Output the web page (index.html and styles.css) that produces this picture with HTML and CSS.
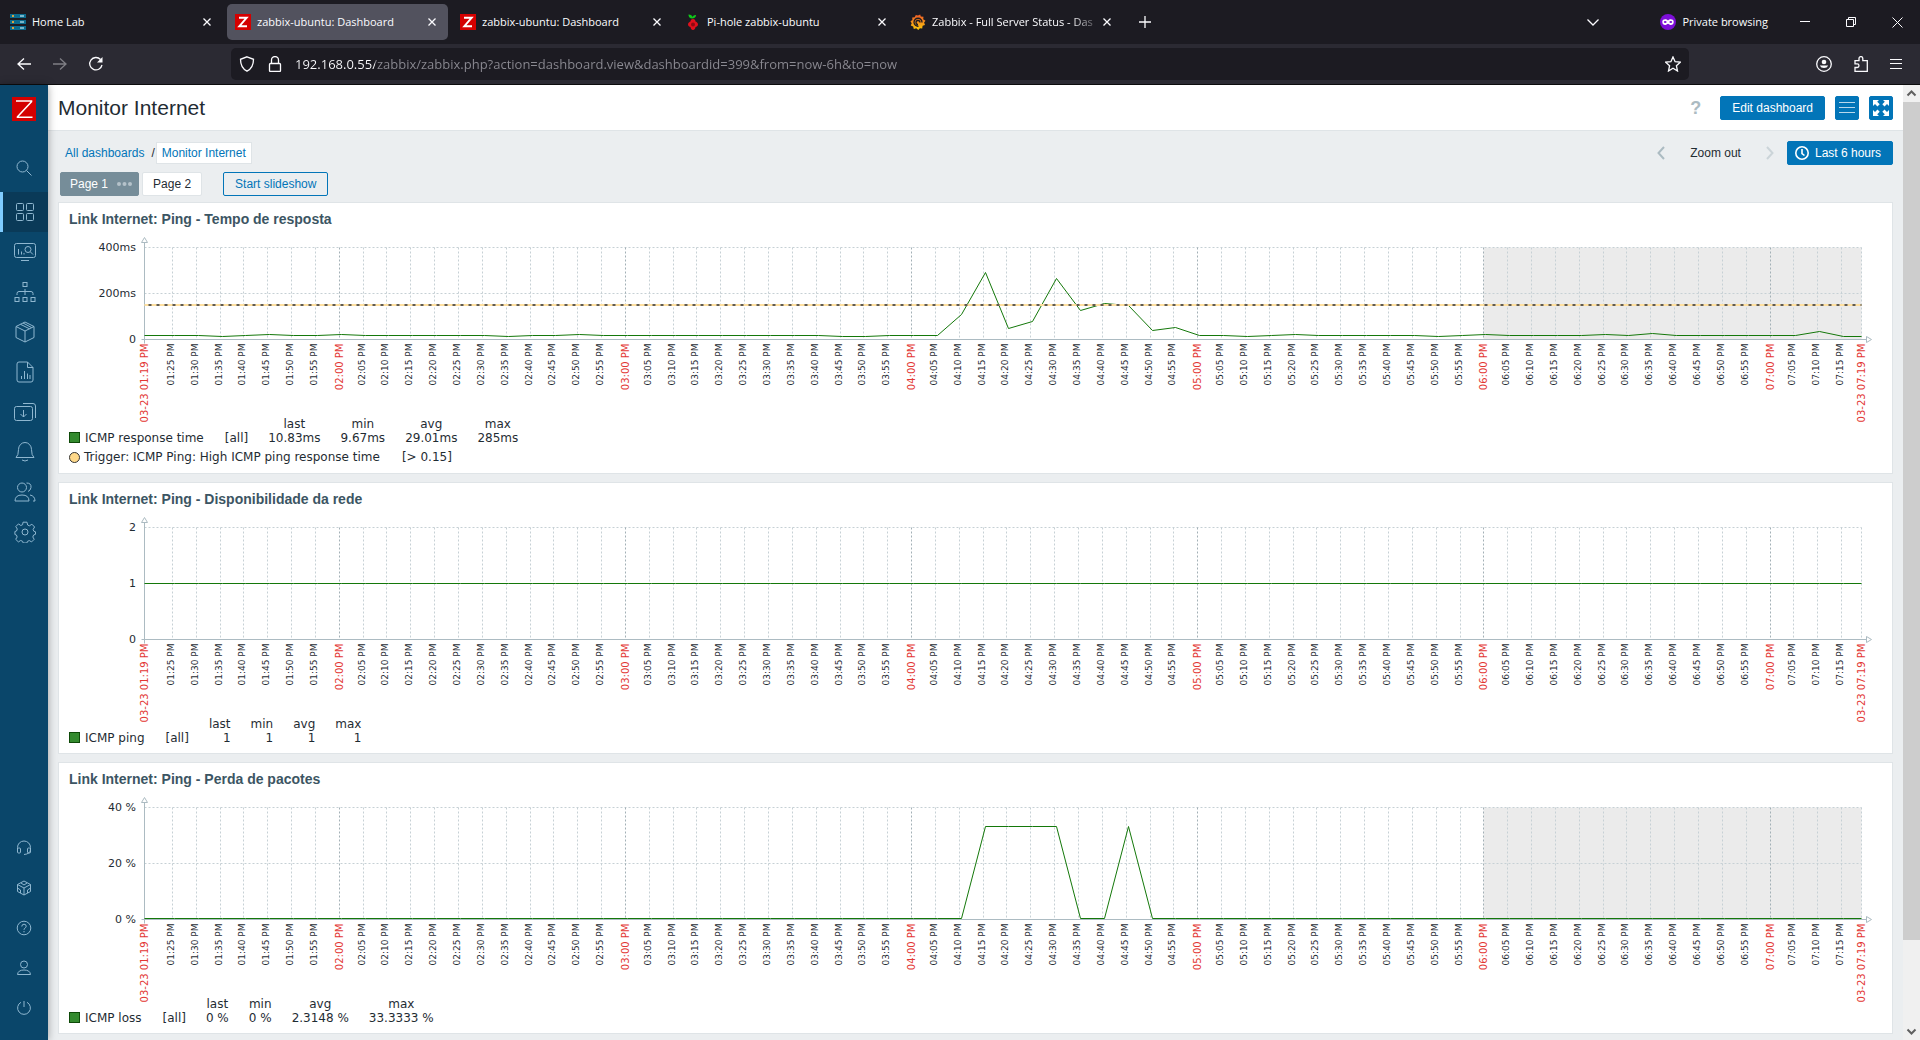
FILE: index.html
```html
<!DOCTYPE html>
<html lang="en">
<head>
<meta charset="utf-8">
<title>zabbix-ubuntu: Dashboard</title>
<link rel="stylesheet" href="styles.css">
</head>
<body>
<header class="browser">
  <div class="tabbar">
    <div class="tabs">
      <div class="tab">
        <svg class="favicon" viewBox="0 0 16 16"><g fill="#0b6a8c"><rect width="16" height="4"/><rect y="6" width="16" height="4"/><rect y="12" width="16" height="4"/></g><g fill="#d9a441"><rect x="2" y="1" width="2" height="2"/><rect x="2" y="7" width="2" height="2"/><rect x="2" y="13" width="2" height="2"/></g><path d="M10 2h4M10 8h4M10 14h4" stroke="#9fd0dd"/></svg>
        <span class="tab-title">Home Lab</span>
        <button class="tab-close" aria-label="Close tab"><svg viewBox="0 0 8 8"><path d="M.5.5l7 7m0-7l-7 7"/></svg></button>
      </div>
      <div class="tab tab-active">
        <svg class="favicon" viewBox="0 0 16 16"><rect width="16" height="16" fill="#d40000"/><path d="M4 3.8h7.6L4.400 12.200H12" fill="none" stroke="#fff" stroke-width="2"/></svg>
        <span class="tab-title">zabbix-ubuntu: Dashboard</span>
        <button class="tab-close" aria-label="Close tab"><svg viewBox="0 0 8 8"><path d="M.5.5l7 7m0-7l-7 7"/></svg></button>
      </div>
      <div class="tab">
        <svg class="favicon" viewBox="0 0 16 16"><rect width="16" height="16" fill="#d40000"/><path d="M4 3.8h7.6L4.400 12.200H12" fill="none" stroke="#fff" stroke-width="2"/></svg>
        <span class="tab-title">zabbix-ubuntu: Dashboard</span>
        <button class="tab-close" aria-label="Close tab"><svg viewBox="0 0 8 8"><path d="M.5.5l7 7m0-7l-7 7"/></svg></button>
      </div>
      <div class="tab">
        <svg class="favicon" viewBox="0 0 16 16"><path d="M7 4.500C4 4 3.500 2 3.500.5 6 .5 7 1.500 7.500 3 8 1.500 9.500.8 11 1c0 2-1.500 3.500-4 3.500z" fill="#10c81a"/><path d="M8 5c2 0 2.500 1.500 2.500 2.500C12 8 13 9 13 10.500s-1.500 2.500-2.500 2.500c0 1.500-1 3-2.500 3s-2.500-1.500-2.500-3C4.500 13 3 12 3 10.500S4 8 5.500 7.500C5.500 6.500 6 5 8 5z" fill="#e0101c"/><circle cx="8" cy="10.500" r="2" fill="#8e0a12"/></svg>
        <span class="tab-title">Pi-hole zabbix-ubuntu</span>
        <button class="tab-close" aria-label="Close tab"><svg viewBox="0 0 8 8"><path d="M.5.5l7 7m0-7l-7 7"/></svg></button>
      </div>
      <div class="tab">
        <svg class="favicon" viewBox="0 0 16 16"><defs><linearGradient id="gf" x2="0" y2="1"><stop stop-color="#f05a28"/><stop offset="1" stop-color="#fbca0a"/></linearGradient></defs><path d="M8 1.500l2.200-1 .6 2 2.700.2-.3 2.500 2.300 1.600-1.400 1.700.9 2.500-2.400.8-.4 2.700-2.300-.3L8.300 16l-2-1.700-2.500.7-.6-2.500-2.400-1 .9-2.300L.5 7.200 2.400 6 2.200 3.500l2.500-.3L5.800 1z" fill="url(#gf)"/><path d="M12 8.500A4 4 0 1 0 8.500 12.200M10 8.500a2 2 0 1 0-2 2" fill="none" stroke="#1c1b22" stroke-width="1.300"/></svg>
        <span class="tab-title tab-title-fade">Zabbix - Full Server Status - Das</span>
        <button class="tab-close" aria-label="Close tab"><svg viewBox="0 0 8 8"><path d="M.5.5l7 7m0-7l-7 7"/></svg></button>
      </div>
      <button class="new-tab" aria-label="New tab"><svg viewBox="0 0 12 12"><path d="M6 0v12M0 6h12"/></svg></button>
    </div>
    <div class="window-tools">
      <button class="chrome-btn" aria-label="List all tabs"><svg width="14" height="14" viewBox="0 0 14 14"><path d="M1.500 4.500L7 10l5.500-5.500"/></svg></button>
      <span class="private"><svg width="16" height="16" viewBox="0 0 16 16"><circle cx="8" cy="8" r="8" fill="#7d0fd8"/><path d="M8 6.500C6.500 4.800 2.500 4.900 2.300 7.500 2.200 10.300 4 11.200 5.500 11c1.200-.2 1.700-1.200 2.500-1.200s1.300 1 2.500 1.200c1.500.2 3.300-.7 3.200-3.500C13.500 4.900 9.500 4.800 8 6.500z" fill="#fff"/><ellipse cx="5.200" cy="8" rx="1.400" ry="1" fill="#7d0fd8"/><ellipse cx="10.800" cy="8" rx="1.400" ry="1" fill="#7d0fd8"/></svg>Private browsing</span>
      <button class="win-btn" aria-label="Minimize"><svg width="10" height="10" viewBox="0 0 10 10"><path d="M0 4.500h10"/></svg></button>
      <button class="win-btn" aria-label="Restore"><svg width="11" height="11" viewBox="0 0 11 11"><path d="M.5 2.500h7v7h-7zM2.500 2.500v-2h7v7h-2"/></svg></button>
      <button class="win-btn" aria-label="Close window"><svg width="11" height="11" viewBox="0 0 11 11"><path d="M.5.5l10 10m0-10l-10 10"/></svg></button>
    </div>
  </div>
  <div class="toolbar">
    <div class="nav-buttons">
      <button class="chrome-btn" aria-label="Back"><svg width="16" height="16" viewBox="0 0 16 16"><path d="M15 8H2m6-5.500L2 8l6 5.500"/></svg></button>
      <button class="chrome-btn" aria-label="Forward" disabled><svg width="16" height="16" viewBox="0 0 16 16"><path d="M1 8h13M8 2.500L14 8l-6 5.500"/></svg></button>
      <button class="chrome-btn" aria-label="Reload"><svg width="16" height="16" viewBox="0 0 16 16"><path d="M14 9A6.200 6.200 0 1 1 12.500 3.500"/><path d="M14.500 1v5.500H9z" fill="#fbfbfe" stroke="none"/></svg></button>
    </div>
    <div class="urlbar">
      <svg width="16" height="16" viewBox="0 0 16 16"><path d="M8 .8l6.500 2.500C14.500 9.500 12.500 13 8 15.200 3.500 13 1.500 9.500 1.500 3.300z"/></svg>
      <svg width="16" height="16" viewBox="0 0 16 16"><rect x="2.500" y="7.500" width="11" height="8" rx="1"/><path d="M4.500 7.500V4a3.500 3.500 0 0 1 7 0v3.500"/></svg>
      <input class="url" type="text" aria-label="Address" value="192.168.0.55/zabbix/zabbix.php?action=dashboard.view&amp;dashboardid=399&amp;from=now-6h&amp;to=now">
      <button class="chrome-btn" aria-label="Bookmark"><svg width="16" height="16" viewBox="0 0 16 16"><path d="M8 .9l2.100 4.800 5.200.5-3.900 3.500 1.100 5.300L8 12.300 3.500 15l1.100-5.300L.7 6.200l5.200-.5z"/></svg></button>
    </div>
    <div class="app-buttons">
      <button class="chrome-btn" aria-label="Account"><svg width="16" height="16" viewBox="0 0 16 16"><circle cx="8" cy="8" r="7.300"/><circle cx="8" cy="6" r="2.300" fill="#fbfbfe" stroke="none"/><path d="M3.800 9.500h8.400A4.500 4 0 0 1 3.800 9.500z" fill="#fbfbfe" stroke="none"/></svg></button>
      <button class="chrome-btn" aria-label="Extensions"><svg width="16" height="16" viewBox="0 0 16 16"><path d="M2 15.300V11.500h2.200a1.800 1.800 0 0 0 0-3.600H2V4.700h4V2.500a1.900 1.900 0 0 1 3.800 0v2.200h4.500v10.600z"/></svg></button>
      <button class="chrome-btn" aria-label="Menu"><svg width="12" height="16" viewBox="0 0 12 16"><path d="M0 3.500h12M0 7.500h12M0 12.500h12"/></svg></button>
    </div>
  </div>
</header>

<div class="app">
  <aside class="sidebar">
    <a class="logo" href="#" aria-label="Zabbix"><svg width="24" height="24" viewBox="0 0 24 24"><rect width="24" height="24" fill="#d40000"/><path d="M4 4h15.500v.8L5.500 19.800v.4H20.500" fill="none" stroke="#fff" stroke-width="1.600"/></svg></a>
    <a class="side-item side-search" href="#" aria-label="Search"><svg width="16" height="16" viewBox="0 0 16 16"><circle cx="6.500" cy="6.500" r="5.500"/><path d="M10.500 10.500l5 5"/></svg></a>
    <nav class="side-menu">
      <a class="side-item side-active" href="#" aria-label="Dashboards"><svg width="20" height="20" viewBox="0 0 20 20"><rect x="1.500" y="1.500" width="7" height="7" rx="1"/><rect x="11.500" y="1.500" width="7" height="7" rx="1"/><rect x="1.500" y="11.500" width="7" height="7" rx="1"/><rect x="11.500" y="11.500" width="7" height="7" rx="1"/></svg></a>
      <a class="side-item" href="#" aria-label="Monitoring"><svg width="22" height="20" viewBox="0 0 22 20"><rect x=".5" y="1.500" width="21" height="14" rx="2"/><path d="M4.500 7v5.500M7.500 9.500v3M10 11v1.500M7 18.500h8M16.500 10l2.500 2.500"/><circle cx="14" cy="7.500" r="3"/></svg></a>
      <a class="side-item" href="#" aria-label="Services"><svg width="22" height="22" viewBox="0 0 22 22"><rect x="9" y="1.500" width="4" height="4"/><rect x="1" y="16.500" width="4" height="4"/><rect x="9" y="16.500" width="4" height="4"/><rect x="17" y="16.500" width="4" height="4"/><path d="M11 8v6M3 14v-1.500q0-2 2-2h12q2 0 2 2V14"/></svg></a>
      <a class="side-item" href="#" aria-label="Inventory"><svg width="20" height="22" viewBox="0 0 20 22"><path d="M10 1l9 4.500v11L10 21l-9-4.500v-11zM1 5.500l9 4.500 9-4.500M10 10v11M5.500 3.300l9 4.500M8 2l8.500 4.500"/></svg></a>
      <a class="side-item" href="#" aria-label="Reports"><svg width="18" height="22" viewBox="0 0 18 22"><path d="M11.500 1H3Q1 1 1 3v16q0 2 2 2h12q2 0 2-2V6.500zV6.500H17M5.500 15v3M8.500 10v8M11.500 12.500V18M14 14v4"/></svg></a>
      <a class="side-item" href="#" aria-label="Data collection"><svg width="22" height="20" viewBox="0 0 22 20"><rect x=".5" y="4.500" width="18" height="14" rx="2"/><path d="M9.500 8v7M6.500 12l3 3 3-3M9 1.500h10q2.500 0 2.500 2.500v12"/></svg></a>
      <a class="side-item" href="#" aria-label="Alerts"><svg width="20" height="22" viewBox="0 0 20 22"><path d="M1 16.500q2.500-2 2.500-8a6.500 7 0 0 1 13 0q0 6 2.500 8zM7 19q3 2 6 0"/></svg></a>
      <a class="side-item" href="#" aria-label="Users"><svg width="22" height="20" viewBox="0 0 22 20"><circle cx="8" cy="5.500" r="4.500"/><path d="M1 19q0-6 7-6t7 6zM12.500 1q5 0 4.500 4.500-.5 3-3 4M16 13q5 1 5 6h-2"/></svg></a>
      <a class="side-item" href="#" aria-label="Administration"><svg width="22" height="22" viewBox="0 0 22 22"><circle cx="11" cy="11" r="3"/><path d="M9 1.200h4l.6 2.800 1.800.8 2.500-1.600 2.700 2.800-1.500 2.400.7 1.800 1.700.6v2.500l-1.900.7-.8 2 1.400 2.300-2.600 2.600-2.300-1.300-1.900.8-.5 1.600H9.200l-.6-1.700-1.900-.8-2.300 1.400-2.700-2.600L3.200 16l-.8-2-1.500-.5v-3l1.600-.5.8-2-1.500-2.400 2.700-2.700L6.800 4.500l1.800-.8z"/></svg></a>
    </nav>
    <nav class="side-menu side-bottom">
      <a class="side-item" href="#" aria-label="Support"><svg width="16" height="16" viewBox="0 0 16 16"><path d="M1.500 9V7.500a6.500 6.500 0 0 1 13 0V9M14.500 9q0 5-6.500 5.500"/><rect x="1.500" y="8" width="3" height="5" rx="1"/><rect x="11.500" y="8" width="3" height="5" rx="1"/></svg></a>
      <a class="side-item" href="#" aria-label="Integrations"><svg width="16" height="16" viewBox="0 0 16 16"><path d="M8 1l6.500 3.500v7L8 15l-6.500-3.500v-7zM1.500 4.500L8 8l6.500-3.500M8 8v7M5 3l3 2 3-2M1.500 8l3 2v3M14.500 8l-3 2v3"/></svg></a>
      <a class="side-item" href="#" aria-label="Help"><svg width="16" height="16" viewBox="0 0 16 16"><circle cx="8" cy="8" r="6.800"/><path d="M5.800 6.500q0-2.300 2.200-2.300t2.200 2q0 1.200-1.100 1.800T8 9.800M8 11v1.300"/></svg></a>
      <a class="side-item" href="#" aria-label="User settings"><svg width="16" height="16" viewBox="0 0 16 16"><circle cx="8" cy="4.500" r="3.500"/><path d="M1.500 14.500q.5-4.500 6.500-4.500t6.500 4.500z"/></svg></a>
      <a class="side-item" href="#" aria-label="Sign out"><svg width="16" height="16" viewBox="0 0 16 16"><path d="M8 1v6M5 2.300a6.400 6.400 0 1 0 6 0"/></svg></a>
    </nav>
  </aside>

  <main class="content">
    <div class="page-head">
      <h1>Monitor Internet</h1>
      <div class="head-tools">
        <a class="help" href="#" aria-label="Help">?</a>
        <button class="btn">Edit dashboard</button>
        <button class="btn btn-icon" aria-label="Actions"><svg width="16" height="12" viewBox="0 0 16 12"><path d="M0 .5h16M0 5.500h16M0 10.500h16" stroke="#b8d8ec"/></svg></button>
        <button class="btn btn-icon" aria-label="Kiosk mode"><svg width="16" height="16" viewBox="0 0 16 16"><path d="M0 0h6L4.200 1.800l2.500 2.500-2.200 2.200L2 4 0 6zM16 0v6l-2-2-2.500 2.500-2.200-2.200 2.500-2.500L10 0zM0 16v-6l2 2 2.500-2.500 2.200 2.200-2.500 2.500L6 16zM16 16h-6l1.800-1.800-2.500-2.500 2.200-2.200L14 12l2-2z" fill="#fff" stroke="none"/></svg></button>
      </div>
    </div>
    <div class="filter-row">
      <nav class="crumbs" aria-label="Breadcrumb"><a href="#">All dashboards</a><span>/</span><a class="crumb-current" href="#">Monitor Internet</a></nav>
      <div class="time-tools">
        <button class="arrow" aria-label="Previous period"><svg width="8" height="14" viewBox="0 0 8 14"><path d="M7 1L1.500 7 7 13"/></svg></button>
        <button class="zoom-out">Zoom out</button>
        <button class="arrow arrow-off" aria-label="Next period" disabled><svg width="8" height="14" viewBox="0 0 8 14"><path d="M1 1l5.500 6L1 13"/></svg></button>
        <button class="btn btn-time"><svg width="14" height="14" viewBox="0 0 14 14"><circle cx="7" cy="7" r="6.200"/><path d="M7 3v4.500l2.500 2"/></svg>Last 6 hours</button>
      </div>
    </div>
    <div class="page-row">
      <button class="page-tab page-tab-on">Page 1<svg width="15" height="4" viewBox="0 0 15 4"><g fill="#b5c2ca"><circle cx="2" cy="2" r="2"/><circle cx="7.500" cy="2" r="2"/><circle cx="13" cy="2" r="2"/></g></svg></button>
      <button class="page-tab">Page 2</button>
      <button class="btn-alt">Start slideshow</button>
    </div>

    <div class="widgets">
      <section class="widget">
        <h2>Link Internet: Ping - Tempo de resposta</h2>
        <div class="chart" data-chart="response"></div>
        <table class="legend">
          <thead><tr><td></td><td></td><th>last</th><th>min</th><th>avg</th><th>max</th></tr></thead>
          <tbody><tr><td><i class="swatch"></i>ICMP response time</td><td>[all]</td><td>10.83ms</td><td>9.67ms</td><td>29.01ms</td><td>285ms</td></tr></tbody>
        </table>
        <p class="trigger"><i class="dot"></i><span>Trigger: ICMP Ping: High ICMP ping response time</span><span>[&gt; 0.15]</span></p>
      </section>
      <section class="widget">
        <h2>Link Internet: Ping - Disponibilidade da rede</h2>
        <div class="chart" data-chart="ping"></div>
        <table class="legend legend-right">
          <thead><tr><td></td><td></td><th>last</th><th>min</th><th>avg</th><th>max</th></tr></thead>
          <tbody><tr><td><i class="swatch"></i>ICMP ping</td><td>[all]</td><td>1</td><td>1</td><td>1</td><td>1</td></tr></tbody>
        </table>
      </section>
      <section class="widget">
        <h2>Link Internet: Ping - Perda de pacotes</h2>
        <div class="chart" data-chart="loss"></div>
        <table class="legend">
          <thead><tr><td></td><td></td><th>last</th><th>min</th><th>avg</th><th>max</th></tr></thead>
          <tbody><tr><td><i class="swatch"></i>ICMP loss</td><td>[all]</td><td>0 %</td><td>0 %</td><td>2.3148 %</td><td>33.3333 %</td></tr></tbody>
        </table>
      </section>
    </div>
  </main>

  <div class="scrollbar" aria-hidden="true">
    <svg width="17" height="17" viewBox="0 0 17 17"><path d="M4.500 10.500l4-4 4 4"/></svg>
    <div class="scroll-track"><div class="scroll-thumb"></div></div>
    <svg width="17" height="17" viewBox="0 0 17 17"><path d="M4.500 6.500l4 4 4-4"/></svg>
  </div>
</div>
<script src="charts.js"></script>
</body>
</html>
```

FILE: styles.css
```css
* { box-sizing: border-box; }
body {
  margin: 0;
  min-height: 100vh;
  display: flex;
  flex-direction: column;
  background: #ebeef0;
  color: #1f2c33;
  font: 12px/16px Arial, "Liberation Sans", sans-serif;
}
button, input { font: inherit; color: inherit; border: 0; padding: 0; margin: 0; background: none; }
a { color: #0275b8; text-decoration: none; }
svg { display: block; flex: none; }
h1, h2, p { margin: 0; }

/* Browser frame */
.browser {
  background: #1c1b22;
  color: #fbfbfe;
  border-bottom: 1px solid #0c0c0d;
  font: 11px/16px "Open Sans", "Noto Sans", sans-serif;
}
.browser svg { fill: none; stroke: #fbfbfe; stroke-width: 1.3; }
.browser .favicon, .private svg { stroke: none; }
.tabbar { display: flex; justify-content: space-between; height: 44px; padding: 4px 0; }
.tabs { display: flex; gap: 4px; padding-left: 2px; min-width: 0; }
.tab {
  width: 221px;
  height: 36px;
  padding: 0 8px;
  display: flex;
  align-items: center;
  gap: 6px;
  border-radius: 5px;
}
.tab-active { background: #52525e; }
.favicon { width: 16px; height: 16px; }
.tab-title { flex: 1; min-width: 0; white-space: nowrap; }
.tab-title-fade { mask-image: linear-gradient(90deg, #000 86%, transparent 106%); }
.tab-close { width: 16px; height: 24px; display: flex; align-items: center; justify-content: center; }
.tab-close svg { width: 8px; height: 8px; }
.new-tab { width: 36px; height: 36px; display: flex; align-items: center; justify-content: center; }
.new-tab svg { width: 12px; height: 12px; }
.window-tools { display: flex; align-items: center; }
.private { display: flex; align-items: center; gap: 6px; margin: 0 14px 0 60px; }
.win-btn { width: 46px; height: 36px; display: flex; align-items: center; justify-content: center; }
.browser .win-btn svg { stroke-width: 1; }
.chrome-btn { display: flex; align-items: center; justify-content: center; }
.chrome-btn:disabled { opacity: .4; }
.toolbar {
  height: 40px;
  padding: 4px 18px 4px 16px;
  display: flex;
  align-items: stretch;
  background: #2b2a33;
}
.nav-buttons { display: flex; gap: 20px; width: 215px; align-items: center; flex: none; }
.urlbar {
  flex: 1;
  display: flex;
  align-items: center;
  gap: 12px;
  padding: 0 8px;
  background: #1c1b22;
  border-radius: 5px;
}
.url {
  flex: 1;
  height: 24px;
  font-size: 13px;
  color: transparent;
  background: linear-gradient(90deg, #fbfbfe 80px, #8b8a92 80px);
  background-clip: text;
  -webkit-background-clip: text;
}
.app-buttons { display: flex; align-items: center; gap: 21px; margin-left: 127px; }
.browser .app-buttons .chrome-btn:last-child svg { stroke-width: 1; }

/* Sidebar */
.app { flex: 1; display: flex; }
.sidebar {
  width: 48px;
  flex: none;
  display: flex;
  flex-direction: column;
  background: #0a466a;
  box-shadow: 0 0 8px rgba(0, 0, 0, .35);
  z-index: 1;
}
.logo { padding: 12px 12px 0; height: 63px; }
.side-item { display: flex; align-items: center; justify-content: center; height: 40px; padding-left: 2px; }
.side-item svg { fill: none; stroke: #8fb7d0; stroke-width: 1; }
.side-search { margin-bottom: 4px; padding-left: 0; }
.side-active { background: #0a3a58; border-left: 3px solid #7fccff; padding-right: 1px; padding-left: 0; }
.side-bottom { margin-top: auto; padding-bottom: 12px; }
.side-bottom .side-item { padding-left: 0; }

/* Page header and filters */
.content { flex: 1; min-width: 0; }
.page-head {
  height: 46px;
  padding: 0 10px;
  display: flex;
  align-items: center;
  justify-content: space-between;
  background: #fff;
  border-bottom: 1px solid #dfe4e7;
}
h1 { font-size: 21px; line-height: 24px; font-weight: 400; }
.head-tools { display: flex; align-items: center; gap: 10px; }
.help { color: #acbbc2; font-size: 18px; font-weight: 700; margin-right: 9px; }
.btn {
  height: 24px;
  padding: 0 11px;
  border: 1px solid #0275b8;
  border-radius: 2px;
  background: #0275b8;
  color: #fff;
}
.btn-icon { width: 24px; padding: 0; display: flex; align-items: center; justify-content: center; }
.filter-row { display: flex; align-items: center; justify-content: space-between; height: 41px; padding: 2px 10px 0; }
.crumbs { display: flex; align-items: center; padding-left: 7px; }
.crumbs span { padding: 0 1px 0 7px; }
.crumb-current { padding: 2px 5px; border: 1px solid #dfe4e7; background: #fff; }
.time-tools { display: flex; align-items: center; }
.arrow svg { fill: none; stroke: #acbbc2; stroke-width: 2; }
.arrow-off { opacity: .5; }
.zoom-out { margin: 0 25px; }
.btn-time { display: flex; align-items: center; gap: 6px; margin-left: 13px; padding: 0 11px 0 7px; }
.btn-time svg { fill: none; stroke: #fff; stroke-width: 1.6; }
.page-row { display: flex; align-items: center; gap: 3px; padding: 0 12px 6px; }
.page-tab {
  height: 24px;
  padding: 0 10px;
  border: 1px solid #dfe4e7;
  border-radius: 2px;
  background: #fff;
}
.page-tab-on { display: flex; align-items: center; gap: 9px; padding: 0 6px 0 9px; border-color: #768d99; background: #768d99; color: #fff; }
.btn-alt { height: 24px; margin-left: 18px; padding: 0 11px; border: 1px solid #0275b8; border-radius: 2px; color: #0275b8; }

/* Widgets */
.widgets { display: flex; flex-direction: column; gap: 8px; padding: 0 10px 4px; }
.widget { min-height: 272px; padding: 8px 10px 4px; border: 1px solid #dfe4e7; background: #fff; }
h2 { font-size: 14px; line-height: 16px; font-weight: 700; color: #3c5563; }
.chart { margin-top: 6px; }
.chart svg { overflow: visible; }
.chart text { font: 11px "DejaVu Sans", sans-serif; fill: #1f2c33; }
.chart .tick-small { font-size: 9px; }
.chart .tick-main { font-size: 10px; fill: #e33734; }
.axis { stroke: #acbbc2; fill: none; }
.grid { stroke: #c6d0d5; stroke-dasharray: 2 2; fill: none; }
.grid-main { stroke: #a3b0b6; }
.night { fill: #ebebeb; }
.series { stroke: #14780a; fill: none; }
.threshold { stroke: #ffe0a0; stroke-width: 2; }
.threshold-dash { stroke: #5f5a52; stroke-width: 2; stroke-dasharray: 3 5; }
.legend, .trigger { font: 12px/14px "DejaVu Sans", sans-serif; color: #1f2c33; }
.legend { border-collapse: collapse; }
.legend th, .legend td { padding: 0 20px 0 0; font-weight: 400; text-align: center; white-space: nowrap; }
.legend-right th, .legend-right td { text-align: right; }
.legend th, .legend td { height: 14px; }
.legend td:first-child { padding-right: 21px; }
.swatch { display: inline-block; width: 11px; height: 11px; margin-right: 5px; border: 1px solid #0e4a08; background: #338a2e; vertical-align: -1px; }
.trigger { display: flex; align-items: center; gap: 22px; padding-top: 5px; }
.dot { width: 11px; height: 11px; margin-right: -18px; border: 1px solid #333; border-radius: 50%; background: #ffd98a; }

/* Scrollbar */
.scrollbar { width: 17px; flex: none; display: flex; flex-direction: column; background: #f0f0f0; }
.scrollbar svg { fill: none; stroke: #606060; stroke-width: 2; }
.scroll-track { flex: 1; }
.scroll-thumb { height: 91%; background: #cdcdcd; }
```

FILE: charts.js
```javascript
const STEP = 5;            // minutes between ticks
const LEAD = 5.83;         // minutes from the left edge to the 01:25 tick
const SPAN = 360;          // minutes shown
const TICKS = 71;

const tickIndex = (h, m) => ((h - 1) * 60 + m - 25) / STEP;

function samples(base, overrides) {
  const list = new Array(TICKS).fill(base);
  for (const [h, m, v] of overrides) list[tickIndex(h, m)] = v;
  return list;
}

const charts = {
  response: {
    height: 92, max: 400, night: true, threshold: 150, lift: 1,
    rows: [[400, '400ms'], [200, '200ms'], [0, '0']],
    values: samples(15, [
      [1, 35, 10], [1, 45, 19], [2, 0, 19], [2, 35, 10], [2, 50, 19], [3, 45, 10], [3, 50, 10],
      [4, 10, 103], [4, 15, 285], [4, 20, 42], [4, 25, 76], [4, 30, 260], [4, 35, 120],
      [4, 40, 152], [4, 45, 145], [4, 50, 36], [4, 55, 50], [5, 10, 10], [5, 20, 19],
      [5, 50, 10], [6, 0, 19], [6, 25, 19], [6, 35, 22], [7, 10, 30], [7, 15, 10]
    ])
  },
  ping: {
    height: 112, max: 2, night: false, lift: 0,
    rows: [[2, '2'], [1, '1'], [0, '0']],
    values: samples(1, [])
  },
  loss: {
    height: 112, max: 40, night: true, lift: 1,
    rows: [[40, '40 %'], [20, '20 %'], [0, '0 %']],
    values: samples(0, [[4, 15, 33], [4, 20, 33], [4, 25, 33], [4, 30, 33], [4, 45, 33]])
  }
};

function draw(box) {
  const c = charts[box.dataset.chart];
  const width = box.clientWidth;
  const left = 75.5, right = width - 20.5, top = 14.5, bottom = top + c.height;
  const xAt = k => Math.floor(left + (k * STEP + LEAD) / SPAN * (right - left)) + 0.5;
  const yAt = v => bottom - (v / c.max) * c.height;
  const out = [];
  const label = (x, text, cls) =>
    out.push(`<text class="${cls}" text-anchor="end" transform="translate(${x} ${bottom + 4}) rotate(-90)">${text}</text>`);

  if (c.night) {
    const x = xAt(tickIndex(6, 0));
    out.push(`<rect class="night" x="${x}" y="${top}" width="${right - x}" height="${c.height}"/>`);
  }
  for (const [v, text] of c.rows) {
    if (v > 0) out.push(`<path class="grid" d="M${left} ${yAt(v)}H${right}"/>`);
    out.push(`<text x="67" y="${Math.round(yAt(v)) + 3}" text-anchor="end">${text}</text>`);
  }
  for (let k = 0; k < TICKS; k++) {
    const minutes = 85 + k * STEP;
    const main = minutes % 60 === 0;
    const time = `0${Math.floor(minutes / 60)}:${String(minutes % 60).padStart(2, '0')} PM`;
    const x = xAt(k);
    out.push(`<path class="grid${main ? ' grid-main' : ''}" d="M${x} ${top}V${bottom - 2}"/>`);
    label(x + (main ? 3.5 : 1.5), time, main ? 'tick-main' : 'tick-small');
  }
  out.push(`<path class="grid" d="M${right} ${top}V${bottom - 2}"/>`);
  label(left + 3.5, '03-23 01:19 PM', 'tick-main');
  label(right + 3.5, '03-23 07:19 PM', 'tick-main');

  out.push(`<path class="axis" d="M${left} ${top - 5}V${bottom + 4}M${left - 3} ${bottom}H${right + 5}"/>`);
  out.push(`<path class="axis" d="M${left - 3} ${top - 5}h6l-3 -5z"/>`);
  out.push(`<path class="axis" d="M${right + 5} ${bottom - 3}v6l5 -3z"/>`);

  const ys = c.values.map(v => Math.floor(yAt(v)) + 0.5 - c.lift);
  const points = [
    `${left} ${ys[0]}`,
    ...ys.map((y, k) => `${xAt(k) + 2} ${y}`),
    `${right} ${ys[ys.length - 1]}`
  ];
  out.push(`<polyline class="series" points="${points.join(' ')}"/>`);

  if (c.threshold) {
    const y = Math.round(yAt(c.threshold));
    out.push(`<path class="threshold" d="M${left} ${y}H${right}"/>`);
    out.push(`<path class="threshold-dash" d="M${left + 4} ${y}H${right}"/>`);
  }
  box.innerHTML = `<svg width="${width}" height="${Math.round(bottom + 77)}">${out.join('')}</svg>`;
}

const drawAll = () => document.querySelectorAll('.chart').forEach(draw);
drawAll();
window.addEventListener('resize', drawAll);
```
